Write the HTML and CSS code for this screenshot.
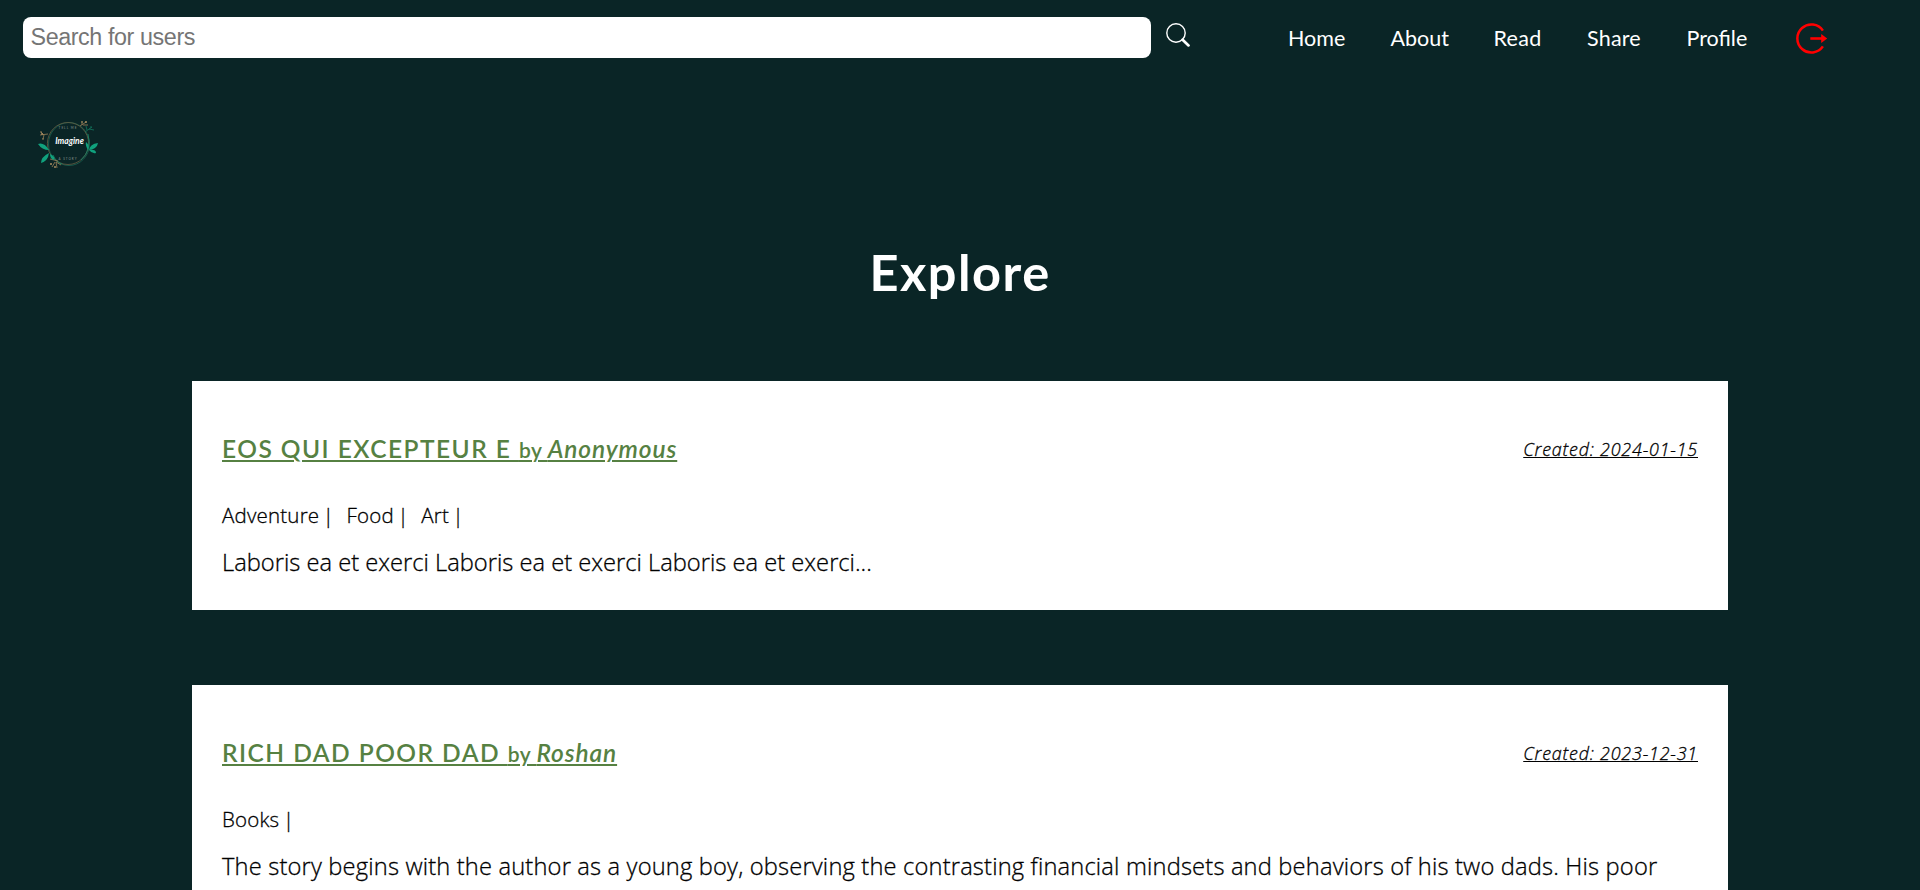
FILE: index.html
```html
<!DOCTYPE html>
<html lang="en">
<head>
<meta charset="utf-8">
<title>Explore</title>
<link rel="stylesheet" href="styles.css">
</head>
<body>
<header class="topbar">
  <input class="search" type="text" placeholder="Search for users">
  <svg class="search-icon" viewBox="0 0 24 24"><circle cx="10" cy="10" r="9.2" fill="none" stroke="#fff" stroke-width="1.4"/><path d="M16.6 16.8l5.9 5.6" stroke="#fff" stroke-width="2.7" stroke-linecap="round"/></svg>
  <nav class="nav">
    <a class="home">Home</a><a class="about">About</a><a class="read">Read</a><a class="share">Share</a><a class="profile">Profile</a>
  </nav>
  <svg class="logout" viewBox="0 0 32 32"><path d="M26.9 7.6A14 14 0 1 0 26.9 23.4" fill="none" stroke="#f00" stroke-width="2.5"/><path d="M14.3 15.5H26" stroke="#f00" stroke-width="2.6"/><path d="M25.2 11L31.200 15.500l-6 4.500z" fill="#f00"/></svg>
</header>
<svg class="logo" viewBox="0 0 64 50">
  <g fill="none" stroke-width=".8">
    <ellipse cx="32" cy="24" rx="20.5" ry="21.5" stroke="#1c6553"/>
    <ellipse cx="31" cy="23.500" rx="20.600" ry="21" stroke="#665d43"/>
    <path d="M44 40Q55 30 51 14M16 35q3 7 9 9" stroke="#168668"/>
    <path d="M11 14l-8 1m4 0l-3-3m3 3l-1 4M43 6l6-4m-4 3V1m1 4l5 0M21 41l-8-2m5 3l-3 5m4-5l1 6m-1-6l5 3" stroke="#9c8258"/>
    <path d="M48 12l7-5m-5 3l-1-4m3 3l5 1m-3-2v-2" stroke="#13765e"/>
  </g>
  <g fill="#a98d61"><circle cx="5" cy="14" r="1"/><circle cx="4" cy="12" r=".8"/><circle cx="6" cy="19" r=".8"/><circle cx="49" cy="2" r="1"/><circle cx="45" cy="2" r=".8"/><circle cx="18" cy="47" r="1"/><circle cx="14" cy="44" r="1"/></g>
  <g fill="#10a17d"><path d="M12 30Q7 22 1 24q4 6 11 6zM12 33q-8 4-8 10 7-2 8-10zM13 34q6 3 4 6-4-1-4-6zM52 30q1-6 9-7-1 6-9 7zM52 30q7-1 7 3-4 1-7-3zM51 30q-3-5-2-8 4 3 2 8z"/></g>
  <text class="logo-small" x="31" y="9" text-anchor="middle">TELL ME</text>
  <text class="logo-name" x="32.500" y="23.500" text-anchor="middle">Imagine</text>
  <text class="logo-small" x="31" y="39.500" text-anchor="middle">A STORY</text>
</svg>
<main class="content">
  <h1 class="heading">Explore</h1>
  <article class="card">
    <div class="card-head">
      <a class="title"><span class="name">EOS QUI EXCEPTEUR E </span><span class="by">by </span><em class="author">Anonymous</em></a>
      <em class="created">Created: 2024-01-15</em>
    </div>
    <div class="tags"><span>Adventure |</span><span>Food |</span><span>Art |</span></div>
    <p class="excerpt">Laboris ea et exerci Laboris ea et exerci Laboris ea et exerci...</p>
  </article>
  <article class="card">
    <div class="card-head">
      <a class="title"><span class="name">RICH DAD POOR DAD </span><span class="by">by </span><em class="author">Roshan</em></a>
      <em class="created">Created: 2023-12-31</em>
    </div>
    <div class="tags"><span>Books |</span></div>
    <p class="excerpt story">The story begins with the author as a young boy, observing the contrasting financial mindsets and behaviors of his two dads. His poor</p>
  </article>
</main>
</body>
</html>
```

FILE: styles.css
```css
* { box-sizing: border-box; }
body { margin: 0; height: 890px; overflow: hidden; background: #0a2526; font-family: "Open Sans", "Noto Sans", sans-serif; }
.topbar { display: flex; align-items: flex-start; height: 120px; padding: 17px 0 0 23px; }
.search { width: 1128px; height: 41px; padding: 0 7.5px; border: 0; border-radius: 8px; background: #fff; font: 23.3px "Liberation Sans", sans-serif; letter-spacing: -.4px; }
.search::placeholder { color: #757575; }
.search-icon { width: 24px; height: 24px; margin: 6px 0 0 15px; }
.nav { display: flex; margin: 6px 0 0 98px; color: #fff; font: 21.5px/30px Lato, sans-serif; white-space: nowrap; }
.home { width: 102.5px; }
.about { width: 103px; }
.read { width: 93.5px; letter-spacing: .3px; }
.share { width: 99.5px; letter-spacing: .2px; }
.profile { width: 109px; }
.logout { width: 32px; height: 32px; margin-top: 6px; }
.logo { display: block; width: 64px; height: 50px; margin-left: 37px; }
.logo-name { fill: #fff; font: italic 700 8.5px Lato, sans-serif; }
.logo-small { fill: #8a9b94; font: 3px Lato, sans-serif; letter-spacing: 1px; }
.content { width: 1536px; margin: 0 auto; }
.heading { margin: 70px 0 77px; color: #fff; text-align: center; font: 700 50.5px/64px Lato, sans-serif; letter-spacing: 1.5px; }
.card { height: 229px; margin-bottom: 75px; padding: 50px 30px 0; background: #fff; color: #000; }
.card-head { display: flex; justify-content: space-between; height: 63px; line-height: 36px; white-space: nowrap; }
.title { color: #568142; text-decoration: underline; text-decoration-thickness: 2px; text-underline-offset: 2px; font-family: Lato, sans-serif; font-weight: 600; }
.name { font-size: 24.5px; letter-spacing: 1.47px; }
.by { font-size: 21px; letter-spacing: .5px; }
.author { font-size: 24.5px; letter-spacing: .9px; }
.created, .tags, .excerpt { font-weight: 300; -webkit-text-stroke: .3px #000; }
.created { font-size: 17.9px; letter-spacing: .8px; text-decoration: underline; text-decoration-thickness: 1px; text-underline-offset: 1px; }
.tags { display: flex; gap: 12.5px; height: 42px; font-size: 20.5px; line-height: 42px; letter-spacing: .2px; word-spacing: -2px; }
.excerpt { margin: 6px 0 0; font-size: 23.7px; line-height: 40px; white-space: nowrap; }
.story { letter-spacing: .165px; }
```
